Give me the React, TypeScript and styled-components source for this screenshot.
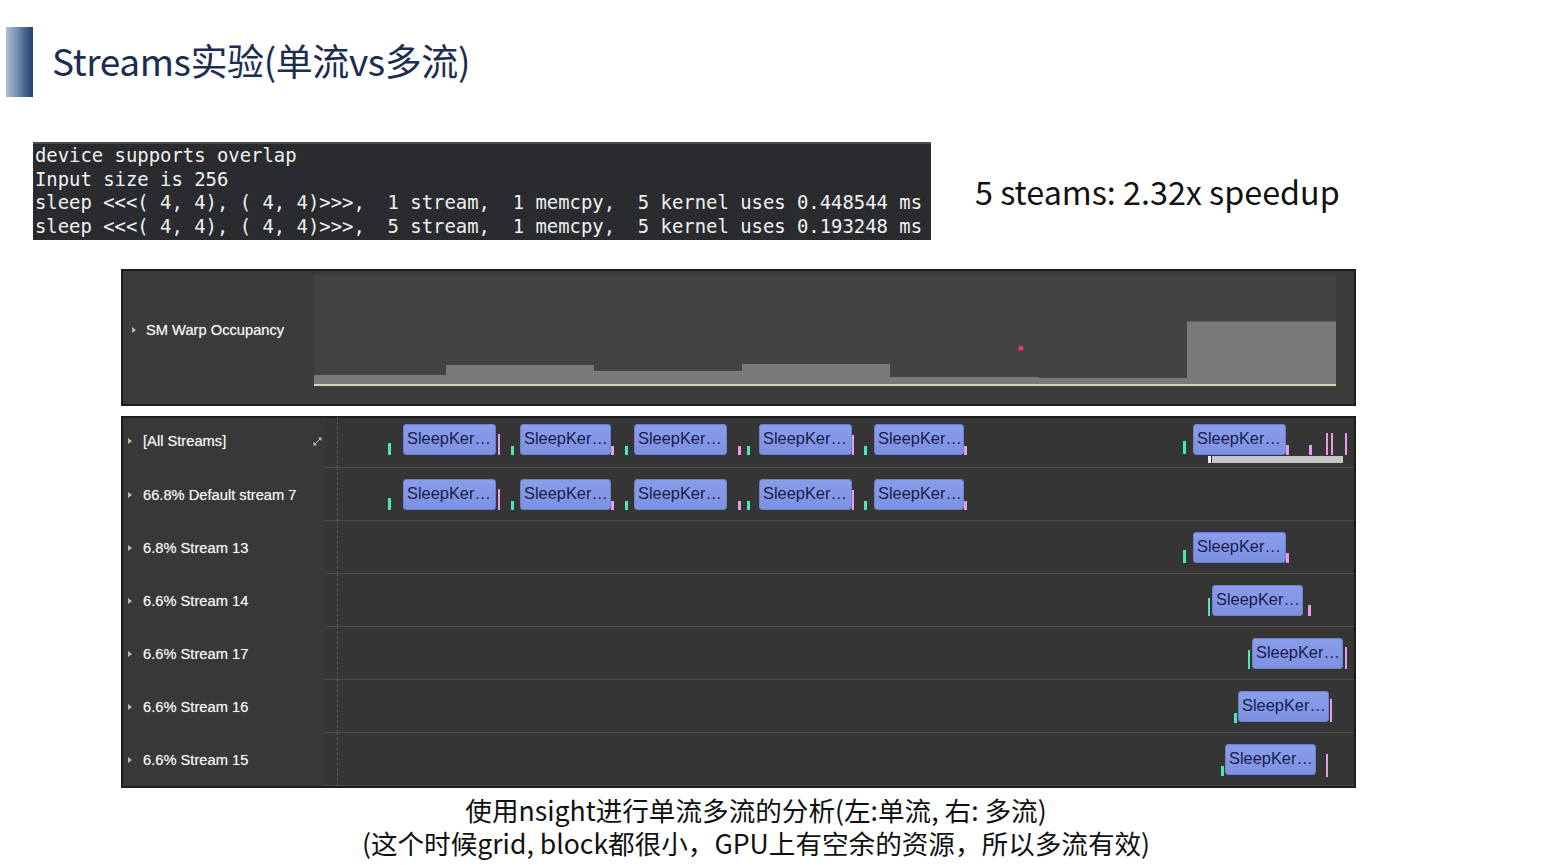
import React from "react";
import styled, { createGlobalStyle } from "styled-components";

const GlobalStyle = createGlobalStyle`
  html, body {
    margin: 0;
    padding: 0;
    background: #ffffff;
  }
  body {
    width: 1548px;
    height: 865px;
    overflow: hidden;
    font-family: "Noto Sans CJK SC", "Noto Sans", sans-serif;
  }
`;

const Slide = styled.div`
  width: 1548px;
  height: 865px;
  background: #ffffff;
  display: flex;
  flex-direction: column;
`;

const Header = styled.header`
  display: flex;
  align-items: center;
  height: 70px;
  margin-top: 27px;
  padding-left: 6px;
`;

const AccentBar = styled.div`
  width: 27px;
  height: 70px;
  background: linear-gradient(
    90deg,
    #aebdd2 0%,
    #7890b2 40%,
    #365684 80%,
    #27436f 100%
  );
`;

const Title = styled.h1`
  margin: 0 0 4px 19px;
  font-family: "Noto Sans CJK SC", sans-serif;
  font-weight: 400;
  font-size: 37px;
  letter-spacing: -0.4px;
  line-height: 1;
  color: #1c2d53;
`;

const OutputRow = styled.div`
  display: flex;
  align-items: center;
  gap: 44px;
  margin-top: 45px;
  padding-left: 33px;
`;

const Terminal = styled.pre`
  margin: 0;
  width: 898px;
  height: 98px;
  box-sizing: border-box;
  padding: 0 0 0 2px;
  background: #2a2b2f;
  border-top: 2px solid #4c4d52;
  color: #f1f1f1;
  font-family: "DejaVu Sans Mono", "Liberation Mono", monospace;
  font-size: 18.9px;
  line-height: 23.5px;
  white-space: pre;
  overflow: hidden;
`;

const Speedup = styled.div`
  font-family: "Noto Sans CJK SC", sans-serif;
  font-size: 32.3px;
  color: #111111;
  line-height: 1;
`;

const Panel = styled.section<{ $gap: number }>`
  margin: ${(p) => p.$gap}px 0 0 121px;
  width: 1235px;
  box-sizing: border-box;
  border: 2px solid #1d1d1d;
  font-family: "Liberation Sans", Arial, sans-serif;
`;

const OccupancyGrid = styled.div`
  display: grid;
  grid-template-columns: 191px 1022px 18px;
  height: 133px;
  background: #3b3b3b;
`;

const OccupancyLabel = styled.div`
  display: flex;
  align-items: center;
  gap: 10px;
  height: 18px;
  margin-top: 50px;
  padding-left: 9px;
`;

const ChartCell = styled.div`
  padding: 4px 0 17px;
  display: flex;
`;

const RowLabelText = styled.span`
  color: #f5f5f5;
  font-size: 14.7px;
  white-space: nowrap;
  text-shadow: 0 0 1px rgba(255, 255, 255, 0.5);
`;

const Caret = styled.span`
  width: 0;
  height: 0;
  border-top: 3px solid transparent;
  border-bottom: 3px solid transparent;
  border-left: 4px solid #b9b9b9;
  flex: none;
`;

const StreamRow = styled.div<{ $height: number }>`
  display: grid;
  grid-template-columns: 202px 1fr;
  height: ${(p) => p.$height}px;
  background: #383838;
`;

const StreamLabel = styled.div<{ $lift: number }>`
  display: flex;
  align-items: center;
  gap: 11px;
  padding-left: 5px;
  padding-right: 4px;
  padding-bottom: ${(p) => p.$lift}px;
  position: relative;
`;

const ExpandIcon = styled.svg`
  position: absolute;
  right: 3px;
  top: 50%;
  margin-top: -6px;
`;

const Track = styled.div`
  position: relative;
  background: #353535;
  border-bottom: 1px solid #4a4a4a;

  &::before {
    content: "";
    position: absolute;
    left: 12px;
    top: -1px;
    bottom: -1px;
    border-left: 1px dashed #585858;
  }
`;

const Kernel = styled.div`
  position: absolute;
  height: 31px;
  box-sizing: border-box;
  padding-left: 3px;
  border-radius: 3px;
  background: linear-gradient(180deg, #8a9deb 0%, #7d91e1 100%);
  border: 1px solid #6d80cc;
  color: #181d4a;
  font-size: 16.4px;
  line-height: 27px;
  white-space: nowrap;
  overflow: hidden;
`;

const Tick = styled.div<{ $kind: "launch" | "sync" | "range" | "marker" }>`
  position: absolute;
  background: ${(p) =>
    p.$kind === "launch"
      ? "#4fe6b6"
      : p.$kind === "sync"
      ? "#e79bea"
      : p.$kind === "range"
      ? "#c6c6c6"
      : "#f2f2f2"};
`;

const Caption = styled.div`
  width: 1512px;
  margin-top: 5px;
  display: flex;
  flex-direction: column;
  align-items: center;
  font-family: "Noto Sans CJK SC", sans-serif;
  font-size: 26.6px;
  color: #111111;
`;

const CaptionLine = styled.div`
  height: 33px;
  line-height: 33px;
  white-space: nowrap;
`;

type Mark =
  | { kind: "kernel"; x: number; w: number; y: number }
  | {
      kind: "launch" | "sync" | "range" | "marker";
      x: number;
      w: number;
      y: number;
      h: number;
    };

type Stream = {
  label: string;
  height: number;
  expand?: boolean;
  marks: Mark[];
};

const TRACK_LEFT = 325;

// the five kernels that run one after another on the default stream
const serialKernels = (top: number): Mark[] => [
  { kind: "launch", x: 388, w: 3, y: top + 19, h: 12 },
  { kind: "kernel", x: 403, w: 93, y: top },
  { kind: "sync", x: 498, w: 2, y: top + 10, h: 21 },
  { kind: "launch", x: 511, w: 3, y: top + 22, h: 9 },
  { kind: "kernel", x: 520, w: 91, y: top },
  { kind: "sync", x: 611, w: 3, y: top + 22, h: 9 },
  { kind: "launch", x: 625, w: 3, y: top + 22, h: 9 },
  { kind: "kernel", x: 634, w: 93, y: top },
  { kind: "sync", x: 738, w: 3, y: top + 22, h: 9 },
  { kind: "launch", x: 747, w: 3, y: top + 22, h: 9 },
  { kind: "kernel", x: 759, w: 93, y: top },
  { kind: "sync", x: 852, w: 2, y: top + 11, h: 20 },
  { kind: "launch", x: 864, w: 3, y: top + 22, h: 9 },
  { kind: "kernel", x: 874, w: 90, y: top },
  { kind: "sync", x: 964, w: 3, y: top + 22, h: 9 },
];

const streams: Stream[] = [
  {
    label: "[All Streams]",
    height: 50,
    expand: true,
    marks: [
      ...serialKernels(6),
      { kind: "launch", x: 1183, w: 3, y: 23, h: 13 },
      { kind: "kernel", x: 1193, w: 93, y: 6 },
      { kind: "sync", x: 1286, w: 3, y: 27, h: 10 },
      { kind: "sync", x: 1309, w: 3, y: 27, h: 10 },
      { kind: "sync", x: 1326, w: 1.5, y: 15, h: 22 },
      { kind: "sync", x: 1331, w: 1.5, y: 15, h: 22 },
      { kind: "sync", x: 1345, w: 2, y: 15, h: 22 },
      { kind: "range", x: 1212, w: 131, y: 38, h: 7 },
      { kind: "marker", x: 1208, w: 3, y: 38, h: 7 },
    ],
  },
  { label: "66.8% Default stream 7", height: 53, marks: serialKernels(11) },
  {
    label: "6.8% Stream 13",
    height: 53,
    marks: [
      { kind: "launch", x: 1183, w: 3, y: 29, h: 13 },
      { kind: "kernel", x: 1193, w: 93, y: 11 },
      { kind: "sync", x: 1286, w: 3, y: 32, h: 10 },
    ],
  },
  {
    label: "6.6% Stream 14",
    height: 53,
    marks: [
      { kind: "launch", x: 1208, w: 2, y: 24, h: 18 },
      { kind: "kernel", x: 1212, w: 91, y: 11 },
      { kind: "sync", x: 1308, w: 3, y: 31, h: 11 },
    ],
  },
  {
    label: "6.6% Stream 17",
    height: 53,
    marks: [
      { kind: "launch", x: 1248, w: 2, y: 23, h: 19 },
      { kind: "kernel", x: 1252, w: 91, y: 11 },
      { kind: "sync", x: 1345, w: 2, y: 20, h: 22 },
    ],
  },
  {
    label: "6.6% Stream 16",
    height: 53,
    marks: [
      { kind: "launch", x: 1234, w: 3, y: 33, h: 10 },
      { kind: "kernel", x: 1238, w: 91, y: 11 },
      { kind: "sync", x: 1330, w: 2, y: 19, h: 23 },
    ],
  },
  {
    label: "6.6% Stream 15",
    height: 53,
    marks: [
      { kind: "launch", x: 1221, w: 3, y: 33, h: 10 },
      { kind: "kernel", x: 1225, w: 91, y: 11 },
      { kind: "sync", x: 1326, w: 2, y: 21, h: 23 },
    ],
  },
];

// warp occupancy steps: [x start, x end, top], chart is 1022 x 112
const occupancy: [number, number, number][] = [
  [0, 132, 100],
  [132, 280, 90],
  [280, 428, 96],
  [428, 576, 89],
  [576, 725, 102],
  [725, 873, 103],
  [873, 1022, 46.5],
];

const terminalLines = [
  "device supports overlap",
  "Input size is 256",
  "sleep <<<( 4, 4), ( 4, 4)>>>,  1 stream,  1 memcpy,  5 kernel uses 0.448544 ms",
  "sleep <<<( 4, 4), ( 4, 4)>>>,  5 stream,  1 memcpy,  5 kernel uses 0.193248 ms",
];

const OccupancyChart = () => (
  <svg width="1022" height="112" viewBox="0 0 1022 112">
    <rect x="0" y="0" width="1022" height="112" fill="#434343" />
    {occupancy.map(([x0, x1, top]) => (
      <rect key={x0} x={x0} y={top} width={x1 - x0} height={110 - top} fill="#797979" />
    ))}
    <rect x="0" y="109" width="1022" height="2" fill="#d6d4b6" />
    <circle cx="707" cy="73" r="2.6" fill="#e9385c" />
  </svg>
);

const Expand = () => (
  <ExpandIcon width="9" height="9" viewBox="0 0 9 9">
    <path d="M5 0.5h3.5V4z" fill="#b8c4d8" />
    <path d="M4 8.5H0.5V5z" fill="#b8c4d8" />
    <path d="M7.5 1.5L1.5 7.5" stroke="#b8c4d8" strokeWidth="1" />
  </ExpandIcon>
);

const StreamTrack = ({ marks }: { marks: Mark[] }) => (
  <Track>
    {marks.map((m, i) => {
      const pos = { left: m.x - TRACK_LEFT, top: m.y, width: m.w };
      if (m.kind === "kernel") {
        return (
          <Kernel key={i} style={pos}>
            SleepKer…
          </Kernel>
        );
      }
      return <Tick key={i} $kind={m.kind} style={{ ...pos, height: m.h }} />;
    })}
  </Track>
);

const App = () => (
  <Slide>
    <GlobalStyle />
    <Header>
      <AccentBar />
      <Title>Streams实验(单流vs多流)</Title>
    </Header>

    <OutputRow>
      <Terminal>{terminalLines.join("\n")}</Terminal>
      <Speedup>5 steams: 2.32x speedup</Speedup>
    </OutputRow>

    <Panel $gap={29}>
      <OccupancyGrid>
        <div>
          <OccupancyLabel>
            <Caret />
            <RowLabelText>SM Warp Occupancy</RowLabelText>
          </OccupancyLabel>
        </div>
        <ChartCell>
          <OccupancyChart />
        </ChartCell>
        <div />
      </OccupancyGrid>
    </Panel>

    <Panel $gap={10}>
      {streams.map((s) => (
        <StreamRow key={s.label} $height={s.height}>
          <StreamLabel $lift={s.expand ? 4 : 0}>
            <Caret />
            <RowLabelText>{s.label}</RowLabelText>
            {s.expand && <Expand />}
          </StreamLabel>
          <StreamTrack marks={s.marks} />
        </StreamRow>
      ))}
    </Panel>

    <Caption>
      <CaptionLine>使用nsight进行单流多流的分析(左:单流, 右: 多流)</CaptionLine>
      <CaptionLine>(这个时候grid, block都很小，GPU上有空余的资源，所以多流有效)</CaptionLine>
    </Caption>
  </Slide>
);

export default App;
